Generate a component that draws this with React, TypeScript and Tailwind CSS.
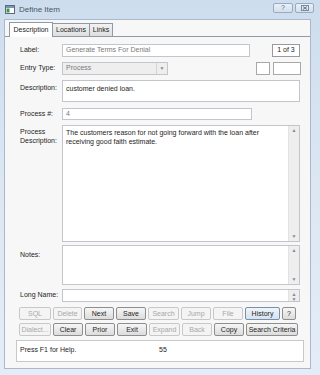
import React from "react"

const font = { fontFamily: '"Liberation Sans", Arial, sans-serif' }

type Btn = { label: string; w: number; off?: boolean; blue?: boolean }

const row1: Btn[] = [
  { label: "SQL", w: 32, off: true },
  { label: "Delete", w: 29, off: true },
  { label: "Next", w: 30 },
  { label: "Save", w: 30 },
  { label: "Search", w: 31, off: true },
  { label: "Jump", w: 30, off: true },
  { label: "File", w: 30, off: true },
  { label: "History", w: 35, blue: true },
  { label: "?", w: 14 },
]

const row2: Btn[] = [
  { label: "Dialect...", w: 32, off: true },
  { label: "Clear", w: 30 },
  { label: "Prior", w: 30 },
  { label: "Exit", w: 30 },
  { label: "Expand", w: 31, off: true },
  { label: "Back", w: 30, off: true },
  { label: "Copy", w: 30 },
  { label: "Search Criteria", w: 52 },
]

function Button({ b }: { b: Btn }) {
  let cls =
    "h-[13px] flex items-center justify-center rounded-[2px] border text-[7px] leading-none whitespace-nowrap "
  if (b.off) cls += "border-[#c8c8c8] bg-[#f4f4f4] text-[#a8a8a8]"
  else if (b.blue) cls += "border-[#7c8fa8] bg-gradient-to-b from-[#eef4fa] to-[#d6e3f0] text-[#1e1e1e]"
  else cls += "border-[#8e8e8e] bg-gradient-to-b from-[#f6f6f6] to-[#dcdcdc] text-[#1e1e1e]"
  return (
    <div className={cls} style={{ width: b.w }}>
      {b.label}
    </div>
  )
}

function ScrollBar({ spin }: { spin?: boolean }) {
  return (
    <div className="w-[11px] h-full bg-[#eeeeee] border-l border-[#e2e2e2] flex flex-col justify-between items-center text-[#8a8a8a] text-[5px] leading-none py-[2px]">
      <span>▲</span>
      {!spin && <span className="flex-1" />}
      <span>▼</span>
    </div>
  )
}

export default function App() {
  return (
    <div
      className="w-[320px] h-[375px] bg-gradient-to-b from-[#cddded] via-[#dce7f3] to-[#e4edf7] flex flex-col"
      style={font}
    >
      {/* title bar */}
      <div className="h-[19px] flex items-center px-[5px]">
        <svg width="10" height="9" viewBox="0 0 10 9" className="mr-[4px]">
          <rect x="0.5" y="0.5" width="9" height="8" fill="#fff" stroke="#5a6b80" />
          <rect x="1" y="1" width="8" height="2" fill="#7b93b5" />
          <rect x="1.5" y="3.5" width="3" height="4" fill="#3f9a48" />
        </svg>
        <span className="text-[8px] text-[#4a5666]">Define Item</span>
        <div className="flex-1" />
        <div className="w-[20px] h-[10px] mt-[-4px] rounded-[2px] border border-[#9aabbf] bg-gradient-to-b from-[#e9f0f8] to-[#d3dfec] flex items-center justify-center text-[7px] text-[#5a6a80] leading-none">
          ?
        </div>
        <div className="w-[19px] h-[10px] mt-[-4px] ml-[2px] mr-[1px] rounded-[2px] border border-[#9aabbf] bg-gradient-to-b from-[#e9f0f8] to-[#d3dfec] flex items-center justify-center">
          <svg width="8" height="6" viewBox="0 0 8 6">
            <rect x="0.5" y="0.5" width="7" height="5" fill="none" stroke="#7a8aa0" />
            <path d="M2 1.5 L6 4.5 M6 1.5 L2 4.5" stroke="#5a6a80" strokeWidth="0.9" />
          </svg>
        </div>
      </div>

      {/* client area */}
      <div className="ml-[4px] w-[307px] h-[350px] bg-[#f7f7f7] border border-[#a9b8cb] flex flex-col">
        {/* tabs */}
        <div className="mt-[2px] h-[15px] flex items-end pl-[4px] border-b border-[#8e9aa8]">
          <div className="h-[15px] w-[44px] bg-white border border-b-0 border-[#8e9aa8] flex items-center justify-center text-[7px] text-[#1e1e1e] mb-[-1px]">
            Description
          </div>
          <div className="h-[13px] w-[37px] bg-gradient-to-b from-[#f2f2f2] to-[#dedede] border border-b-0 border-l-0 border-[#8e9aa8] flex items-center justify-center text-[7px] text-[#1e1e1e]">
            Locations
          </div>
          <div className="h-[13px] w-[23px] bg-gradient-to-b from-[#f2f2f2] to-[#dedede] border border-b-0 border-l-0 border-[#8e9aa8] flex items-center justify-center text-[7px] text-[#1e1e1e]">
            Links
          </div>
        </div>

        {/* form */}
        <div className="pl-[15px] pt-[7px] flex flex-col text-[7px] text-[#1e1e1e]">
          <div className="flex items-center h-[13px]">
            <div className="w-[42px]">Label:</div>
            <div className="w-[188px] h-full border border-[#c2c6cc] bg-white flex items-center px-[3px] text-[#7a7a7a]">
              Generate Terms For Denial
            </div>
            <div className="ml-[22px] w-[28px] h-full border border-[#9a9a9a] bg-white flex items-center justify-center">
              1 of 3
            </div>
          </div>

          <div className="flex items-center h-[13px] mt-[5px]">
            <div className="w-[42px]">Entry Type:</div>
            <div className="w-[106px] h-full border border-[#c2c6cc] bg-[#eeeeee] flex items-center pl-[3px] text-[#7a7a7a]">
              <span className="flex-1">Process</span>
              <span className="w-[11px] h-full border-l border-[#d4d4d4] flex items-center justify-center text-[5px] text-[#8a8a8a]">
                ▼
              </span>
            </div>
            <div className="ml-[88px] w-[14px] h-full border border-[#a8a8a8] bg-white" />
            <div className="ml-[3px] w-[28px] h-full border border-[#a8a8a8] bg-white" />
          </div>

          <div className="flex items-start h-[22px] mt-[5px]">
            <div className="w-[42px] pt-[3px]">Description:</div>
            <div className="w-[238px] h-full border border-[#c2c6cc] bg-white px-[3px] pt-[3px]">
              customer denied loan.
            </div>
          </div>

          <div className="flex items-center h-[12px] mt-[6px]">
            <div className="w-[42px]">Process #:</div>
            <div className="w-[190px] h-full border border-[#c2c6cc] bg-white flex items-center px-[3px] text-[#7a7a7a]">
              4
            </div>
          </div>

          <div className="flex items-start h-[117px] mt-[5px]">
            <div className="w-[42px] pt-[2px] leading-[9px]">
              Process
              <br />
              Description:
            </div>
            <div className="w-[238px] h-full border border-[#c2c6cc] bg-white flex">
              <div className="flex-1 px-[3px] pt-[2px] leading-[9px]">
                The customers reason for not going forward with the loan after receiving good faith estimate.
              </div>
              <ScrollBar />
            </div>
          </div>

          <div className="flex items-start h-[40px] mt-[3px]">
            <div className="w-[42px] pt-[5px]">Notes:</div>
            <div className="w-[238px] h-full border border-[#c2c6cc] bg-white flex">
              <div className="flex-1" />
              <ScrollBar />
            </div>
          </div>

          <div className="flex items-center h-[13px] mt-[4px]">
            <div className="w-[42px]">Long Name:</div>
            <div className="w-[238px] h-full border border-[#c2c6cc] bg-white flex">
              <div className="flex-1" />
              <ScrollBar spin />
            </div>
          </div>
        </div>

        {/* buttons */}
        <div className="pl-[14px] mt-[5px] flex gap-[2px]">
          {row1.map((b) => (
            <Button key={b.label} b={b} />
          ))}
        </div>
        <div className="pl-[14px] mt-[3px] flex gap-[2px]">
          {row2.map((b) => (
            <Button key={b.label} b={b} />
          ))}
        </div>

        {/* status */}
        <div className="ml-[11px] mt-[4px] w-[288px] h-[22px] border border-[#c8c8c8] bg-white flex items-start pt-[4px] pl-[3px] text-[7px] text-[#1e1e1e]">
          <span className="w-[139px]">Press F1 for Help.</span>
          <span>55</span>
        </div>
      </div>
    </div>
  )
}
